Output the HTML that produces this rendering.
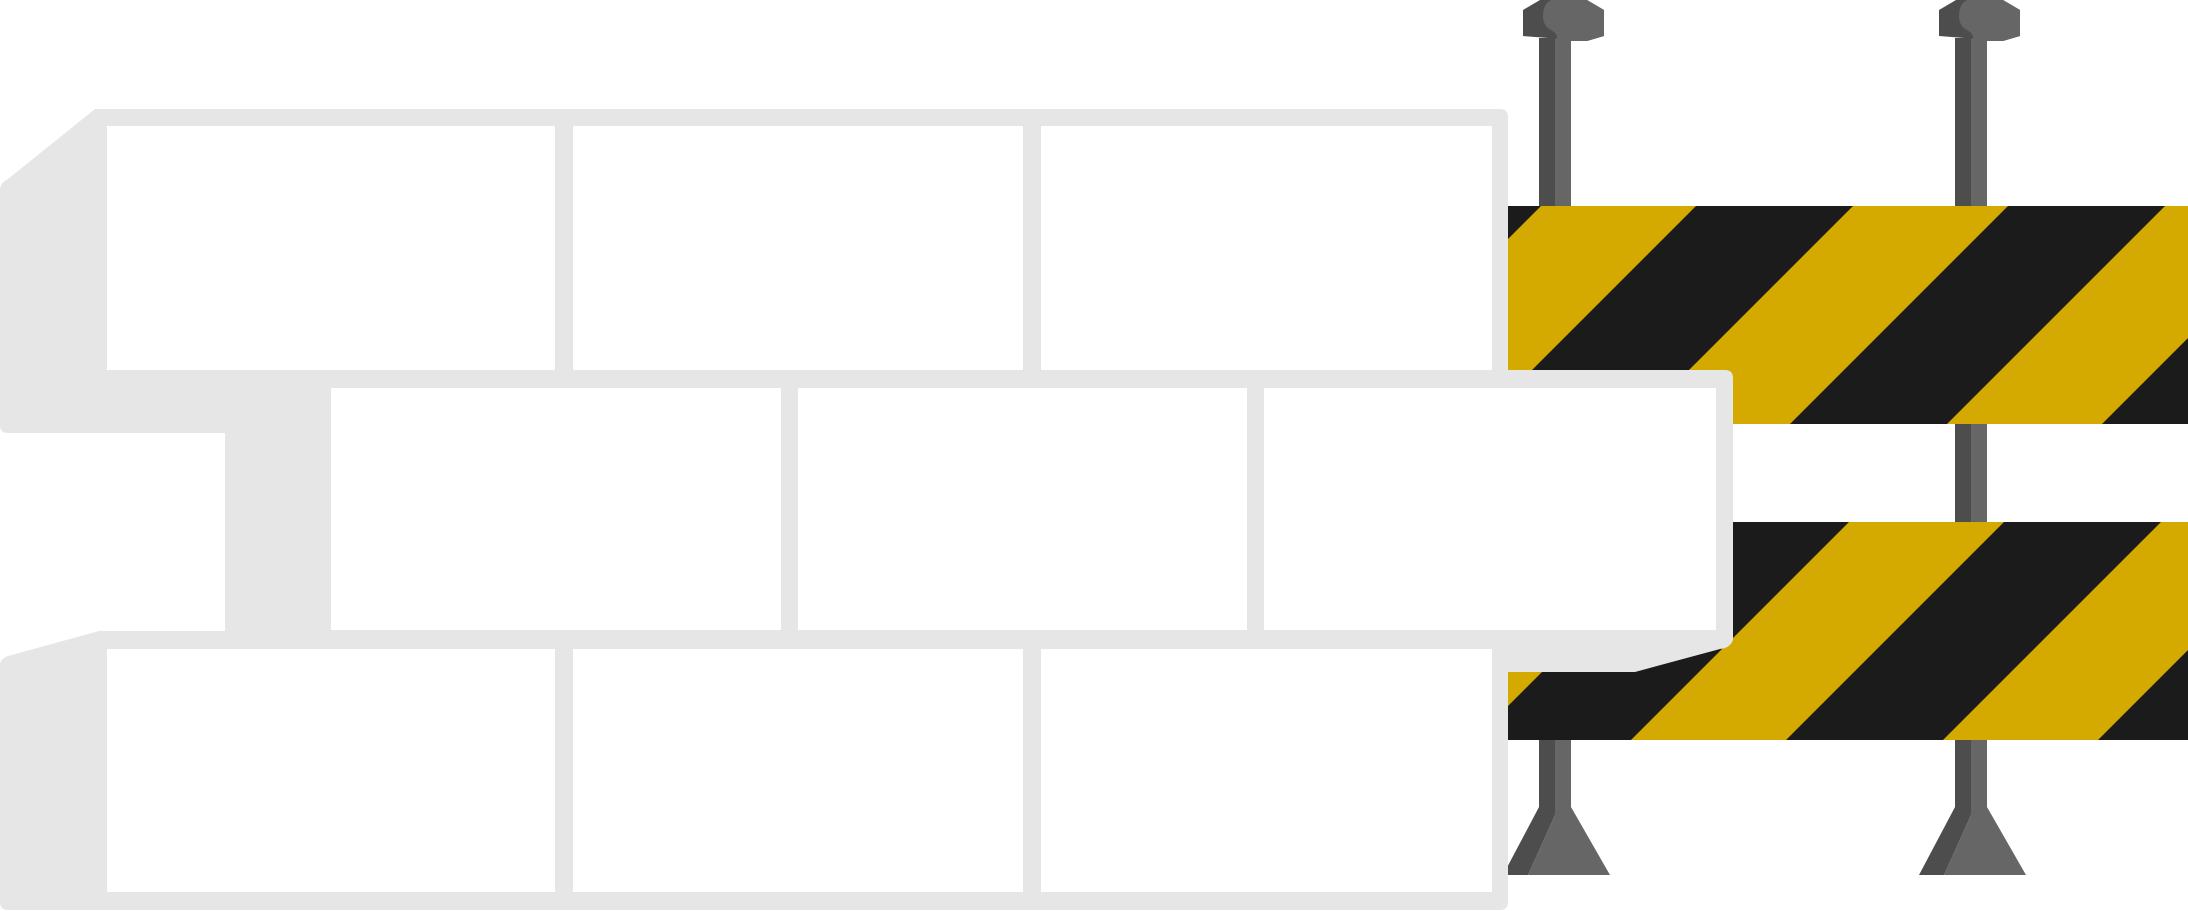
<!DOCTYPE html>
<html><head><style>html,body{margin:0;padding:0;background:#fff}svg{display:block}</style></head>
<body>
<svg width="2188" height="911" viewBox="0 0 2188 911" xmlns="http://www.w3.org/2000/svg">
<defs>
<clipPath id="b1"><rect x="1500" y="206" width="700" height="218"/></clipPath>
<clipPath id="b2"><rect x="1500" y="522" width="700" height="218"/></clipPath>
<g id="stripes">
<rect x="1500" y="150" width="700" height="650" fill="#D4AA00"/>
<g fill="#1B1B1B">
<polygon points="1278,0 1435,0 635,800 478,800"/>
<polygon points="1590,0 1747,0 947,800 790,800"/>
<polygon points="1902,0 2059,0 1259,800 1102,800"/>
<polygon points="2214,0 2371,0 1571,800 1414,800"/>
<polygon points="2526,0 2683,0 1883,800 1726,800"/>
<polygon points="2838,0 2995,0 2195,800 2038,800"/>
</g>
</g>
<g id="post">
<rect x="0" y="38" width="16" height="770" fill="#4D4D4D"/>
<rect x="16" y="38" width="16" height="770" fill="#666"/>
<polygon points="-16,10 1,0 48,0 65,10 65,36 48,41 -16,36" fill="#4D4D4D"/>
<path d="M12,0 L48,0 L65,10 L65,36 L48,41 L18,41 L18,36 Q16,32 12,30 Q4,26 4,16 Q4,4 12,0Z" fill="#666"/>
<polygon points="0,807 16,807 16,815 -11,875 -36,875" fill="#4D4D4D"/>
<polygon points="16,807 32,807 71,875 -11,875 16,815" fill="#666"/>
</g>
</defs>
<use href="#post" x="1539"/>
<use href="#post" x="1955"/>
<g clip-path="url(#b1)"><use href="#stripes"/></g>
<g clip-path="url(#b2)"><use href="#stripes"/></g>
<path d="M95,109 L1500,109 Q1508,109 1508,117 L1508,370 L1725,370 Q1733,370 1733,378 L1733,640 Q1730,648 1720,649 L1635,672 L1508,672 L1508,902 Q1508,910 1500,910 L8,910 Q0,910 0,902 L0,665 Q0,659 8,656 L99,631 L225,631 L225,433 L8,433 Q0,433 0,425 L0,190 Q0,183 8,179 Z" fill="#E6E6E6"/>
<g fill="#fff">
<rect x="107" y="126" width="448" height="244"/>
<rect x="573" y="126" width="450" height="244"/>
<rect x="1041" y="126" width="451" height="244"/>
<rect x="331" y="388" width="450" height="242"/>
<rect x="798" y="388" width="449" height="242"/>
<rect x="1264" y="388" width="452" height="242"/>
<rect x="107" y="649" width="448" height="243"/>
<rect x="573" y="649" width="450" height="243"/>
<rect x="1041" y="649" width="451" height="243"/>
</g>
</svg>
</body></html>
